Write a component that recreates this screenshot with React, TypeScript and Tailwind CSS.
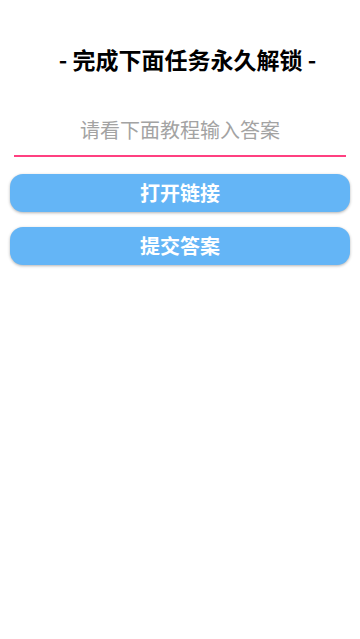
import { useState } from "react";

export default function App() {
  const [answer, setAnswer] = useState<string>("");

  return (
    <div
      className="w-[360px] h-[639px] bg-white"
      style={{ fontFamily: '"Noto Sans CJK SC", "Noto Sans", sans-serif' }}
    >
      <div className="pt-[44px] pl-[15px] flex justify-center">
        <h1 className="text-[23px] leading-[30px] font-bold text-black">- 完成下面任务永久解锁 -</h1>
      </div>
      <div className="mx-[14px] mt-[32px] border-b-2 border-[#ff4081]">
        <input
          value={answer}
          onChange={(e) => setAnswer(e.target.value)}
          type="text"
          placeholder="请看下面教程输入答案"
          className="block w-full h-[49px] pb-[2px] text-center text-[20px] text-black placeholder:text-[#a3a3a3] outline-none bg-transparent"
        />
      </div>
      <div className="mx-[10px] mt-[17px] flex flex-col gap-[15px]">
        <button className="h-[38px] rounded-[13px] bg-[#64b5f6] text-white text-[20px] font-bold shadow-[0_1px_3px_rgba(0,0,0,0.3)]">
          打开链接
        </button>
        <button className="h-[38px] rounded-[13px] bg-[#64b5f6] text-white text-[20px] font-bold shadow-[0_1px_3px_rgba(0,0,0,0.3)]">
          提交答案
        </button>
      </div>
    </div>
  );
}
